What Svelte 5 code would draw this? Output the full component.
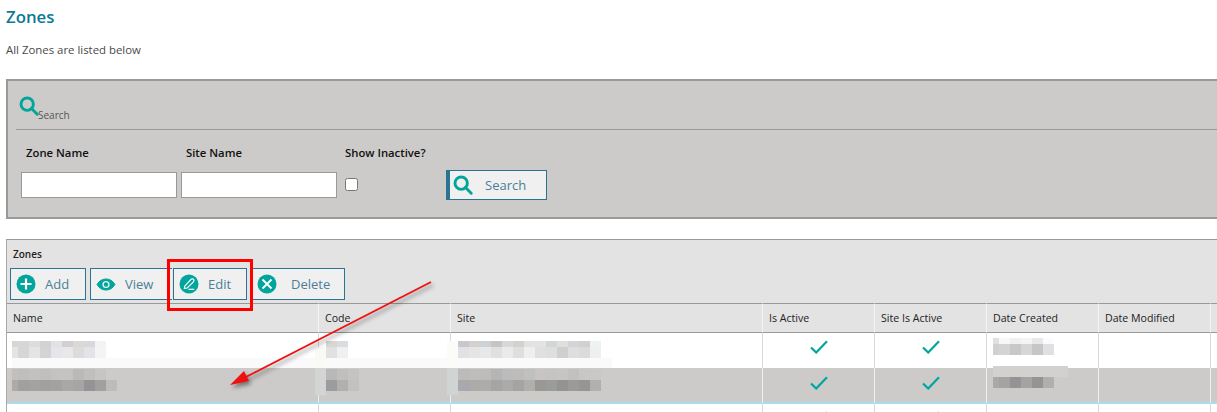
<script lang="ts">
	// pixelated (redacted) cell contents, as runs of 11px blocks
	function run(x, y, h, colors, first = 11) {
		let left = x;
		return colors.map((c, i) => {
			const w = i === 0 ? first : 11;
			const block = { x: left, y, w, h, c };
			left += w;
			return block;
		});
	}

	const blocks = [
		{ x: 12, y: 358, w: 600, h: 10, c: '#fafafa' },
		{ x: 315, y: 347, w: 11, h: 21, c: '#f9f9f6' },
		{ x: 315, y: 368, w: 11, h: 27, c: '#d2d5d3' },
		{ x: 447, y: 341, w: 11, h: 27, c: '#fbfbf7' },
		{ x: 447, y: 368, w: 11, h: 27, c: '#d0d5d3' },
		...run(12, 341, 6, ['#d9d5d3', '#d5d6d8', '#dcdcdc', '#d2d2d2', '#e2e2e4', '#d0d0d2', '#dcd8d6', '#d8d8dc', '#f3f3f6'], 6),
		...run(12, 347, 11, ['#e6e4de', '#d6d6d6', '#e4e4e4', '#d4d4d4', '#e6e6ea', '#e8e8e8', '#dedcda', '#e2e4e8', '#f4f4f6'], 6),
		...run(12, 369, 11, ['#c2c0be', '#bfbebc', '#c2c1bf', '#c0bfbd', '#c4c3c1', '#c4c3c1', '#bbb9b7', '#c0bfbd', '#c6c5c3'], 6),
		...run(12, 380, 11, ['#b0aaa6', '#a0a0a0', '#a2a2a2', '#a0a0a0', '#a2a2a2', '#a8a8a8', '#a6a5a3', '#949496', '#a2a09e', '#bcbcba'], 6),
		...run(326, 341, 6, ['#d8d5d3', '#dbdcdf']),
		...run(326, 347, 11, ['#e0e1e3', '#eef1f0']),
		...run(326, 369, 11, ['#b8b8b8', '#c0bfbd', '#c4c3c1']),
		...run(326, 380, 11, ['#9c9c9e', '#b0b0b0', '#c2c1bf']),
		...run(458, 341, 6, ['#c8c7cc', '#d2d1cf', '#cdd2d5', '#c6c5c6', '#d8d8d8', '#d2d2d0', '#e2e2e0', '#e2e4e4', '#d4d6d6', '#dfdfdc', '#d2d4d6', '#d0d0d2', '#eef2f2']),
		...run(458, 347, 11, ['#e2e1e6', '#e6e5e3', '#e6e9e9', '#e2e0de', '#e8ebed', '#e0dfdd', '#efefef', '#e2e0de', '#dcdfe2', '#d0cfcd', '#dedede', '#dcdbdb', '#ecf0f1']),
		...run(458, 369, 11, ['#bcbbb9', '#bebdbb', '#bdbcba', '#b6b5b3', '#bcbbbb', '#bdbcba', '#c0c1bf', '#c6c5c3', '#c5c4c2', '#c6c5c3', '#c2c1bf', '#c8c7c5', '#c9c8c6']),
		...run(458, 380, 11, ['#aaa8ae', '#acaba9', '#acacac', '#a6a5a3', '#aaaaaa', '#a5a4a2', '#aeb0aa', '#9a9896', '#9a9c9a', '#949390', '#9a9a98', '#969494', '#b0b0b0']),
		...run(993, 338, 6, ['#e0e0e0', '#f8f8f8', '#f0f0f0', '#f4f4f4', '#e8e8e8', '#fbfbfb'], 6),
		...run(993, 344, 11, ['#d0d0d0', '#d4d4d2', '#c8c8ca', '#d6d6d4', '#c6c6c8', '#e0e0e2'], 6),
		{ x: 993, y: 366, w: 75, h: 11, c: '#d2d1cf' },
		...run(993, 377, 11, ['#aaa9a7', '#a4a3a0', '#949496', '#a4a3a1', '#949496', '#b0afae'], 6)
	];

	const columns = ['Name', 'Code', 'Site', 'Is Active', 'Site Is Active', 'Date Created', 'Date Modified'];
	const rows = [{ selected: false }, { selected: true }, { selected: false }];
</script>

{#snippet lens()}
	<svg class="lens" viewBox="0 0 22 22" aria-hidden="true">
		<circle cx="9" cy="9" r="6.800" fill="none" stroke="#00a69c" stroke-width="3.200" />
		<path d="M13.800 13.800 20 20" fill="none" stroke="#00a69c" stroke-width="3.200" stroke-linecap="round" />
	</svg>
{/snippet}

{#snippet check()}
	<svg class="check" viewBox="0 0 18 14" aria-hidden="true">
		<path d="M1 7.500 6.200 12.500 17 1.200" fill="none" stroke="#00a69c" stroke-width="2.200" />
	</svg>
{/snippet}

<div class="page">
	<h1>Zones</h1>
	<p class="lead">All Zones are listed below</p>

	<section class="search">
		<div class="search__head">
			{@render lens()}
			<span>Search</span>
		</div>
		<div class="search__form">
			<label class="field">
				<span>Zone Name</span>
				<input type="text" />
			</label>
			<label class="field">
				<span>Site Name</span>
				<input type="text" />
			</label>
			<label class="field field--check">
				<span>Show Inactive?</span>
				<input type="checkbox" />
			</label>
			<button class="btn btn--search">
				{@render lens()}
				<span>Search</span>
			</button>
		</div>
	</section>

	<section class="grid">
		<div class="grid__title">Zones</div>
		<div class="toolbar">
			<button class="btn btn--add">
				<svg viewBox="0 0 20 20" aria-hidden="true">
					<circle cx="10" cy="10" r="9.500" fill="#00a69c" />
					<path d="M10 4.500v11M4.500 10h11" stroke="#fff" stroke-width="2.200" />
				</svg>
				<span>Add</span>
			</button>
			<button class="btn btn--view">
				<svg class="eye" viewBox="0 0 20 13" aria-hidden="true">
					<path d="M1 6.500C3.500 2.500 6.500 1 10 1s6.500 1.500 9 5.500C16.500 10.500 13.500 12 10 12S3.500 10.500 1 6.500Z" fill="#00a69c" stroke="#00a69c" />
					<circle cx="10" cy="6.500" r="3.600" fill="#f0f0f0" />
					<circle cx="10" cy="6.500" r="2.200" fill="#00a69c" />
				</svg>
				<span>View</span>
			</button>
			<button class="btn btn--edit">
				<svg viewBox="0 0 20 20" aria-hidden="true">
					<circle cx="10" cy="10" r="9.500" fill="#00a69c" />
					<path d="M5.800 12.200 12 5.400c.8-.8 2-.8 2.600 0s.5 1.700-.2 2.400L8.200 14l-2.800.6Z" fill="none" stroke="#fff" stroke-width="1.200" />
					<path d="M9.500 15.300h5.700" stroke="#fff" stroke-width="1.200" />
				</svg>
				<span>Edit</span>
			</button>
			<button class="btn btn--delete">
				<svg viewBox="0 0 20 20" aria-hidden="true">
					<circle cx="10" cy="10" r="9.500" fill="#00a69c" />
					<path d="m5.500 5.500 9 9M14.500 5.500l-9 9" stroke="#fff" stroke-width="1.800" />
				</svg>
				<span>Delete</span>
			</button>
		</div>

		<table>
			<thead>
				<tr>
					{#each columns as col}
						<th>{col}</th>
					{/each}
					<th class="spare"></th>
				</tr>
			</thead>
			<tbody>
				{#each rows as row}
					<tr class:selected={row.selected}>
						<td></td>
						<td></td>
						<td></td>
						<td class="mid">{@render check()}</td>
						<td class="mid">{@render check()}</td>
						<td></td>
						<td></td>
						<td class="spare"></td>
					</tr>
				{/each}
			</tbody>
		</table>
	</section>

	<!-- annotation and redaction layer drawn over the screenshot -->
	{#each blocks as b}
		<i class="block" style="left:{b.x}px;top:{b.y}px;width:{b.w}px;height:{b.h}px;background:{b.c}"></i>
	{/each}
	<div class="callout"></div>
	<svg class="arrow" width="1217" height="412" aria-hidden="true">
		<path d="M431 282 240 380" fill="none" stroke="#f01010" stroke-width="1.800" />
		<path d="M230 385 244 371 249 381Z" fill="#f01010" />
	</svg>
</div>

<style>
	:global(body) {
		background: #fff;
	}

	.page {
		position: relative;
		height: 412px;
		overflow: hidden;
		font-family: 'Open Sans', 'Noto Sans', sans-serif;
		font-size: 10.5px;
		color: #444;
	}

	h1 {
		margin: 0;
		padding: 6px 0 0 6px;
		height: 37px;
		box-sizing: border-box;
		font-size: 16.8px;
		line-height: 21px;
		font-weight: 600;
		color: #0b7a93;
	}

	.lead {
		margin: 0;
		padding-left: 6px;
		height: 42px;
		padding-top: 5px;
		box-sizing: border-box;
		font-size: 11.4px;
		line-height: 15px;
		color: #4a4a4a;
	}

	.search {
		box-sizing: border-box;
		height: 140px;
		margin-left: 6px;
		margin-right: -4px;
		background: #cccbc9;
		border: 2px solid #999;
	}

	.search__head {
		display: flex;
		align-items: flex-end;
		margin: 0 0 0 8px;
		height: 49px;
		box-sizing: border-box;
		padding: 0 0 7px 3px;
		border-bottom: 1px solid #999;
		color: #555;
		font-size: 10px;
		line-height: 14px;
	}

	.search__head .lens {
		width: 20px;
		height: 20px;
		margin: 0 -1px 6px 0;
	}

	.search__form {
		display: flex;
		align-items: flex-start;
		padding: 0 0 0 13px;
	}

	.field {
		display: flex;
		flex-direction: column;
		width: 160px;
	}

	.field span {
		box-sizing: border-box;
		padding: 15px 0 0 5px;
		height: 42px;
		color: #111;
		font-weight: 600;
		font-size: 11.300px;
		line-height: 16px;
	}

	.field input[type='text'] {
		box-sizing: border-box;
		width: 156px;
		height: 26px;
		margin: 0;
		border: 1px solid #999;
		background: #fff;
	}

	.field--check {
		width: 100px;
	}

	.field--check span {
		padding-left: 4px;
		white-space: nowrap;
	}

	.field--check input {
		width: 13px;
		height: 13px;
		margin: 6px 0 0 4px;
		appearance: none;
		background: #fff;
		border: 1px solid #767676;
		border-radius: 2.500px;
	}

	.btn {
		display: flex;
		align-items: center;
		box-sizing: border-box;
		padding: 0;
		margin: 0;
		height: 32px;
		background: #f0f0f0;
		border: 1px solid #2a7391;
		font: inherit;
		font-size: 13px;
		color: #4a7f98;
	}

	.btn svg {
		width: 20px;
		height: 20px;
		flex: none;
	}

	.btn--search {
		width: 101px;
		height: 30px;
		margin: 40px 0 0 5px;
		border-left-width: 4px;
		padding-left: 3px;
	}

	.btn--search span {
		margin-left: 12px;
	}

	.grid {
		box-sizing: border-box;
		margin: 20px 0 0 6px;
		border-top: 1px solid #999;
		border-left: 1px solid #aaa;
		background: #e3e3e3;
	}

	.grid__title {
		height: 28px;
		padding: 7px 0 0 6px;
		box-sizing: border-box;
		font-size: 10px;
		line-height: 14px;
		font-weight: 600;
		color: #222;
	}

	.toolbar {
		display: flex;
		height: 35px;
		padding-left: 3px;
		box-sizing: border-box;
		gap: 4px;
	}

	.btn--add {
		width: 76px;
		padding-left: 5px;
	}

	.btn--add span {
		margin-left: 9px;
	}

	.btn--view {
		width: 82px;
		padding-left: 5px;
		border-right: 0;
	}

	.btn--view .eye {
		height: 13px;
	}

	.btn--view span {
		margin-left: 9px;
	}

	.btn--edit {
		width: 74px;
		margin-left: -3px;
		padding-left: 5px;
	}

	.btn--edit span {
		margin-left: 9px;
	}

	.btn--delete {
		width: 95px;
		margin-left: -1px;
		padding-left: 6px;
	}

	.btn--delete span {
		margin-left: 14px;
	}

	table {
		width: 1210px;
		table-layout: fixed;
		border-collapse: separate;
		border-spacing: 0;
	}

	th {
		box-sizing: border-box;
		height: 30px;
		padding: 0 0 0 6px;
		text-align: left;
		font-weight: 400;
		font-size: 10.6px;
		color: #222;
		background: #e3e3e3;
		border-top: 1px solid #999;
		border-bottom: 1px solid #999;
		border-right: 1px solid #f4f4f4;
	}

	th:nth-child(1) {
		width: 312px;
	}
	th:nth-child(2) {
		width: 132px;
	}
	th:nth-child(3) {
		width: 312px;
	}
	th:nth-child(4),
	th:nth-child(5),
	th:nth-child(6),
	th:nth-child(7) {
		width: 112px;
	}

	td {
		box-sizing: border-box;
		height: 35px;
		padding: 0 0 8px;
		background: #fff;
		border-right: 1px solid #d9d9d9;
	}

	tr.selected td {
		height: 36px;
		padding-bottom: 6px;
		background: #cccbc9;
		border-right-color: #e4f1f8;
		border-bottom: 2px solid #a9dcee;
	}

	td.spare {
		border-right: 0;
		background: #fff;
	}

	tr.selected td.spare {
		background: #cccbc9;
	}

	th.spare {
		border-right: 0;
	}

	.mid {
		text-align: center;
	}

	.check {
		display: inline-block;
		width: 18px;
		height: 14px;
		vertical-align: middle;
	}

	.block {
		position: absolute;
		display: block;
	}

	.callout {
		position: absolute;
		left: 167px;
		top: 259px;
		width: 86px;
		height: 52px;
		box-sizing: border-box;
		border: 3px solid #f00;
	}

	.arrow {
		position: absolute;
		left: 0;
		top: 0;
		filter: drop-shadow(2px 3px 2px rgba(0, 0, 0, 0.45));
	}
</style>
